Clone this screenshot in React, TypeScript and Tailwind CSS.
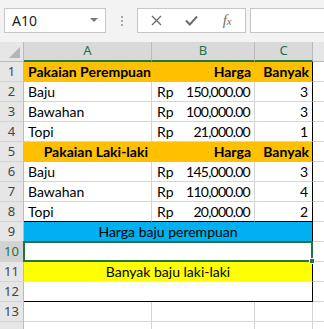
import React from "react";

type Align = "left" | "right" | "center";

interface CellData {
  text?: string;
  rp?: string;
  align?: Align;
  bold?: boolean;
  num?: boolean;
}

interface RowData {
  n: number;
  fill?: boolean;
  blackBottom?: boolean;
  cells: CellData[];
}

const rows: RowData[] = [
  {
    n: 1,
    fill: true,
    cells: [
      { text: "Pakaian Perempuan", bold: true },
      { text: "Harga", bold: true, align: "right" },
      { text: "Banyak", bold: true, align: "right" },
    ],
  },
  { n: 2, cells: [{ text: "Baju" }, { rp: "150,000.00" }, { text: "3", align: "right", num: true }] },
  { n: 3, cells: [{ text: "Bawahan" }, { rp: "100,000.00" }, { text: "3", align: "right", num: true }] },
  { n: 4, cells: [{ text: "Topi" }, { rp: "21,000.00" }, { text: "1", align: "right", num: true }] },
  {
    n: 5,
    fill: true,
    cells: [
      { text: "Pakaian Laki-laki", bold: true, align: "right" },
      { text: "Harga", bold: true, align: "right" },
      { text: "Banyak", bold: true, align: "right" },
    ],
  },
  { n: 6, cells: [{ text: "Baju" }, { rp: "145,000.00" }, { text: "3", align: "right", num: true }] },
  { n: 7, cells: [{ text: "Bawahan" }, { rp: "110,000.00" }, { text: "4", align: "right", num: true }] },
  { n: 8, blackBottom: true, cells: [{ text: "Topi" }, { rp: "20,000.00" }, { text: "2", align: "right", num: true }] },
];

const cellFont = "font-['Lato','Liberation_Sans',sans-serif] text-[14px] leading-[16px] text-black";
const headFont = "font-['Noto_Sans','Open_Sans',sans-serif] text-[13px]";

function RowHead({ n, active }: { n?: number; active?: boolean }) {
  return (
    <div
      className={`flex items-center justify-center border-r border-b border-r-[#bababa] border-b-[#d4d4d4] ${headFont} ${
        active ? "bg-[#d2d2d2] text-[#217346]" : "bg-[#e6e6e6] text-[#444444]"
      }`}
    >
      {n}
    </div>
  );
}

function DataCell({ cell, fill, lastCol, blackBottom }: { cell: CellData; fill?: boolean; lastCol?: boolean; blackBottom?: boolean }) {
  const bg = fill ? "bg-[#ffc000]" : "bg-white";
  const right = lastCol ? "border-r-black" : fill ? "border-r-[#ffc000]" : "border-r-[#d4d4d4]";
  const bottom = blackBottom ? "border-b-black" : fill ? "border-b-[#ffc000]" : "border-b-[#d4d4d4]";
  const align =
    cell.align === "right" ? "justify-end pr-[3px]" : cell.align === "center" ? "justify-center" : "justify-start pl-[4px]";

  if (cell.rp) {
    return (
      <div className={`flex items-end justify-between pb-[1px] pl-[5px] pr-[4px] border-r border-b ${bg} ${right} ${bottom} ${cellFont}`}>
        <span>Rp</span>
        <span className="tracking-[-0.75px]">{cell.rp}</span>
      </div>
    );
  }

  return (
    <div
      className={`flex items-end pb-[1px] border-r border-b whitespace-nowrap overflow-hidden ${bg} ${right} ${bottom} ${align} ${cellFont} ${
        cell.bold ? "font-bold" : ""
      } ${cell.num ? "pr-[4px]" : ""}`}
    >
      {cell.text}
    </div>
  );
}

function Spare() {
  return <div className="bg-white border-b border-b-[#d4d4d4]" />;
}

function FormulaBar() {
  return (
    <div className="h-[42px] bg-[#f3f3f3] pt-[8px] pl-[4px] flex items-start">
      {/* name box */}
      <div className="w-[102px] h-[25px] bg-white border border-[#c6c6c6] flex items-center justify-between pl-[7px] pr-[7px]">
        <span className={`${headFont} text-[14px] text-[#222]`}>A10</span>
        <svg width="8" height="5" viewBox="0 0 8 5">
          <path d="M0 0 L8 0 L4 4 Z" fill="#7a7a7a" />
        </svg>
      </div>
      {/* separator dots */}
      <div className="w-[31px] h-[25px] flex flex-col items-center justify-center gap-[2px]">
        <span className="w-[2px] h-[2px] bg-[#a8a8a8]" />
        <span className="w-[2px] h-[2px] bg-[#a8a8a8]" />
        <span className="w-[2px] h-[2px] bg-[#a8a8a8]" />
      </div>
      {/* cancel / enter / insert function */}
      <div className="w-[109px] h-[25px] bg-white border border-[#c6c6c6] flex items-center">
        <div className="w-[36px] flex justify-center pl-[2px]">
          <svg width="11" height="11" viewBox="0 0 11 11">
            <path d="M1 1 L10 10 M10 1 L1 10" stroke="#6e6e6e" strokeWidth="1.4" />
          </svg>
        </div>
        <div className="w-[36px] flex justify-center">
          <svg width="13" height="11" viewBox="0 0 13 11">
            <path d="M1 5.5 L4.8 9.5 L12 1.5" stroke="#6e6e6e" strokeWidth="2" fill="none" />
          </svg>
        </div>
        <div className="w-[36px] flex justify-center items-baseline font-['Liberation_Serif',serif] italic text-[#6e6e6e]">
          <span className="text-[15px]">f</span>
          <span className="text-[11px]">x</span>
        </div>
      </div>
      {/* formula input */}
      <div className="ml-[4px] flex-1 h-[25px] bg-white border border-[#c6c6c6] border-r-0" />
    </div>
  );
}

export default function App() {
  return (
    <div className="w-[324px] h-[329px] overflow-hidden bg-white">
      <FormulaBar />
      <div className="grid grid-cols-[24px_128px_103px_58px_1fr] auto-rows-[20px]">
        {/* column headers */}
        <div className="relative bg-[#e6e6e6] border-r border-b border-r-[#bababa] border-b-[#bababa]">
          <svg className="absolute right-[3px] bottom-[3px]" width="11" height="11" viewBox="0 0 11 11">
            <path d="M11 0 L11 11 L0 11 Z" fill="#b4b4b4" />
          </svg>
        </div>
        {["A", "B", "C"].map((c) => (
          <div
            key={c}
            className={`flex items-center justify-center bg-[#d9d9d9] border-r border-r-[#bababa] border-b-2 border-b-[#217346] text-[#217346] ${headFont}`}
          >
            {c}
          </div>
        ))}
        <div className="bg-[#e6e6e6] border-b border-b-[#bababa]" />

        {rows.map((r) => (
          <React.Fragment key={r.n}>
            <RowHead n={r.n} />
            {r.cells.map((c, i) => (
              <DataCell key={i} cell={c} fill={r.fill} lastCol={i === 2} blackBottom={r.blackBottom} />
            ))}
            <Spare />
          </React.Fragment>
        ))}

        {/* row 9 */}
        <RowHead n={9} />
        <div className={`col-span-3 flex items-end justify-center pb-[1px] bg-[#00b0f0] border-r border-b border-r-black border-b-[#00b0f0] ${cellFont}`}>
          Harga baju perempuan
        </div>
        <Spare />

        {/* row 10 - selected merged cell */}
        <RowHead n={10} active />
        <div className="col-span-3 relative bg-white border-r border-b border-r-black border-b-[#d4d4d4]">
          <div className="absolute top-[-1px] left-[-1px] right-[-1px] bottom-[-1px] border-2 border-[#217346]" />
          <div className="absolute right-[-3px] bottom-[-3px] w-[6px] h-[6px] bg-[#217346] border border-white" />
        </div>
        <Spare />

        {/* row 11 */}
        <RowHead n={11} />
        <div className={`col-span-3 flex items-end justify-center pb-[1px] bg-[#ffff00] border-r border-b border-r-black border-b-[#ffff00] ${cellFont}`}>
          Banyak baju laki-laki
        </div>
        <Spare />

        {/* row 12 */}
        <RowHead n={12} />
        <div className="col-span-3 bg-white border-r border-b border-r-black border-b-black" />
        <Spare />

        {[13, 14].map((n) => (
          <React.Fragment key={n}>
            <RowHead n={n === 13 ? 13 : undefined} />
            <div className="bg-white border-r border-b border-[#d4d4d4]" />
            <div className="bg-white border-r border-b border-[#d4d4d4]" />
            <div className="bg-white border-r border-b border-[#d4d4d4]" />
            <Spare />
          </React.Fragment>
        ))}
      </div>
    </div>
  );
}
